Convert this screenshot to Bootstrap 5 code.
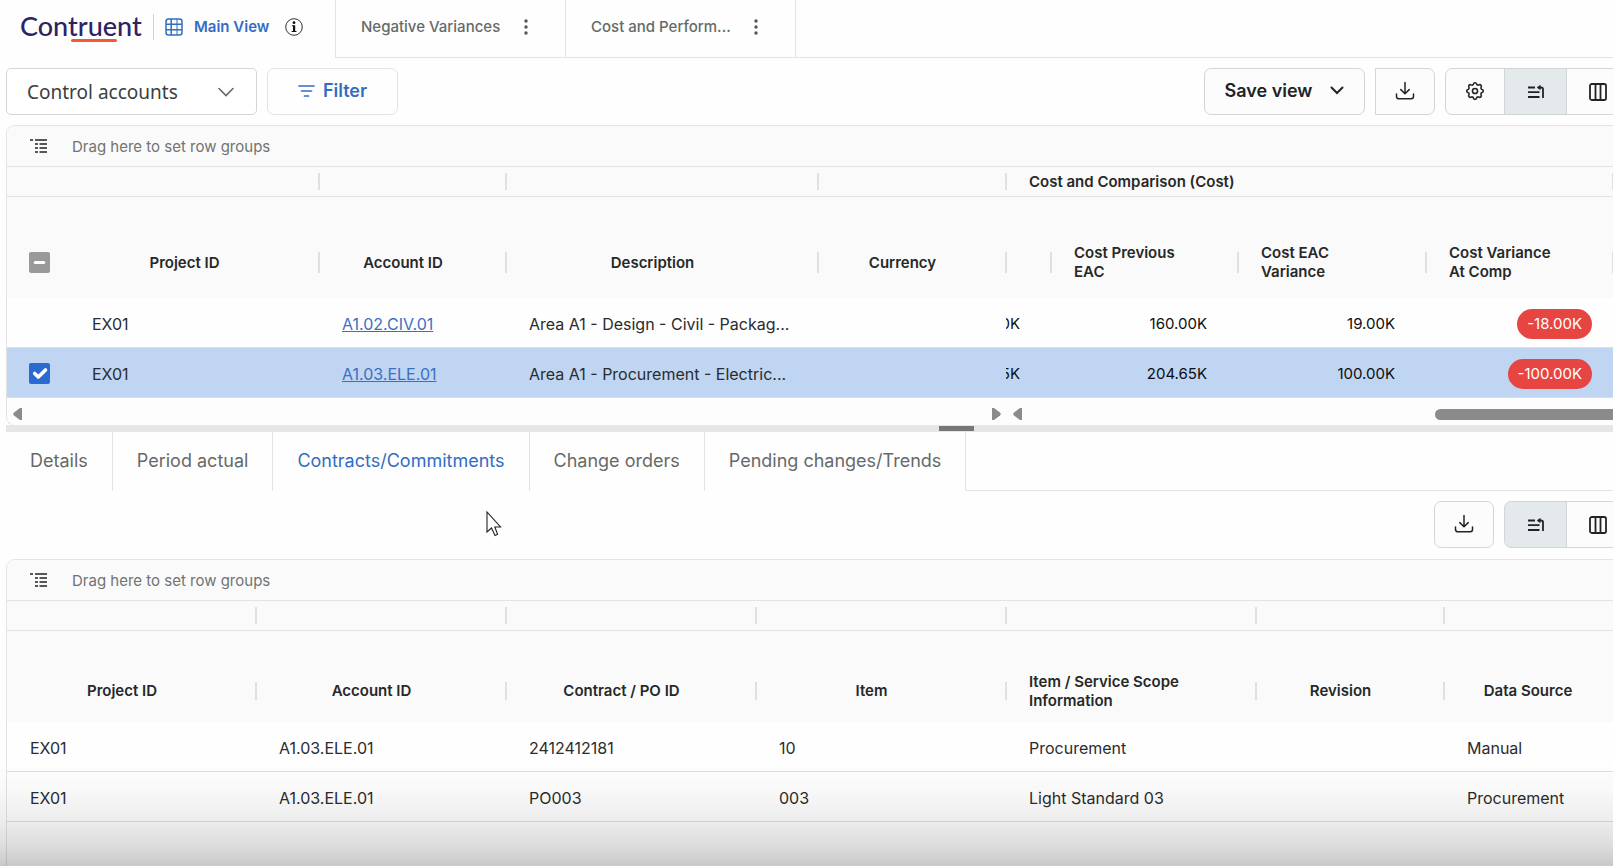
<!DOCTYPE html>
<html lang="en">
<head>
<meta charset="utf-8">
<meta name="viewport" content="width=device-width, initial-scale=1">
<title>Contruent – Control accounts</title>
<link href="https://cdn.jsdelivr.net/npm/bootstrap@5.3.0/dist/css/bootstrap.min.css" rel="stylesheet">
<style>
  :root { --line: #e2e3e4; --edge: #d3d6d9; --blue: #336dc3; --ink: #2a2c2e; --muted: #666a69; --soft: #fafafa; }
  body { font-family: Inter, "Liberation Sans", sans-serif; font-size: 16px; color: var(--ink); background: #fefefe; }
  svg { display: block; flex: none; }
  .shell { height: 100vh; overflow: hidden; }
  .work { margin-left: 6px; margin-right: -18px; }

  /* top bar */
  .topbar { height: 58px; }
  .brand-cell { width: 335px; padding-left: 20px; }
  .brand-name { font-family: Lato, sans-serif; font-size: 27px; line-height: 26px; padding-bottom: 2px; font-weight: 500; color: #2d2363; text-decoration: none; width: 122px; position: relative; }
  .brand-name::after { content: ""; position: absolute; left: 51px; bottom: -1px; width: 46px; height: 3px; border-radius: 2px; background: #f05a35; }
  .brand-rule { width: 1px; height: 26px; background: #cfd2d6; margin: 0 11px; }
  .view-link { font-size: 15px; font-weight: 600; color: var(--blue); text-decoration: none; gap: 11px; }
  .view-link span { padding-top: 1px; }
  .view-tab { width: 230px; border-left: 1px solid var(--line); border-bottom: 1px solid var(--line); padding: 0 20px 3px 25px; font-size: 15px; font-weight: 500; color: var(--muted); }
  .view-tab a { color: inherit; text-decoration: none; width: 155px; }
  .plain-btn { border: 0; background: none; padding: 0; color: inherit; }
  .topbar-rest { border-left: 1px solid var(--line); border-bottom: 1px solid var(--line); }

  /* toolbars */
  .tools { padding: 10px 2px 10px 0; gap: 10px; }
  .tools-lower { padding: 10px 2px 11px 0; gap: 10px; }
  .tool { height: 47px; border: 1px solid var(--edge); border-radius: 7px; background: #fcfcfc; color: #212426; font-size: 18px; font-weight: 600; padding: 0; display: flex; align-items: center; justify-content: center; }
  .tool-icon { width: 60px; padding-bottom: 2px; }
  .tool-group .tool { width: 63px; border-radius: 0; margin-left: -1px; }
  .tool-group .tool:first-child { border-radius: 7px 0 0 7px; margin-left: 0; }
  .tool-group .tool:last-child { border-radius: 0 7px 7px 0; }
  .tool-group .tool.is-on { background: #e4e9ec; }
  .tool-group .tool-gear { width: 60px; padding-bottom: 2px; }
  .tool-filter { width: 131px; background: #fefefe; border-color: var(--line); color: var(--blue); gap: 8px; padding-bottom: 2px; }
  .tool-save { width: 161px; gap: 18px; padding-bottom: 2px; }
  .entity-select { width: 251px; height: 47px; border: 1px solid var(--edge); border-radius: 5px; padding: 2px 20px 0; font-family: "Noto Sans", sans-serif; font-size: 19px; color: #3c4040; background-color: #fff;
    background-image: url("data:image/svg+xml,%3csvg xmlns='http://www.w3.org/2000/svg' viewBox='0 0 16 16'%3e%3cpath fill='none' stroke='%23666' stroke-width='1.6' stroke-linecap='round' d='M1 4.5l7 7 7-7'/%3e%3c/svg%3e"); background-position: right 22px center; background-size: 16px; }

  /* data grids */
  .grid-box { border: 1px solid var(--line); border-right: 0; border-radius: 9px 0 0 9px; overflow: hidden; }
  .grid-open { border-bottom: 0; border-bottom-left-radius: 0; }
  .group-drop { height: 41px; background: var(--soft); border-bottom: 1px solid var(--line); font-size: 15px; color: #707372; padding: 0 0 0 23px; gap: 24px; }
  .group-drop span { padding-top: 2px; }
  .grid-table { table-layout: fixed; width: 1624px; margin: 0; border-collapse: separate; border-spacing: 0; }
  .grid-table th { position: relative; background: var(--soft); font-size: 15px; font-weight: 600; line-height: 19px; padding: 0 54px 0 23px; color: #262829; }
  .band th { height: 30px; border-bottom: 1px solid var(--line); }
  .heads th { height: 101px; padding-top: 29px; }
  .heads-short th { height: 91px; padding-top: 28px; }
  .grid-table .name { text-align: center; padding-left: 23px; padding-right: 42px; }
  .split::after { content: ""; position: absolute; right: -1px; top: 6px; width: 2px; height: 17px; background: #dde1e6; z-index: 1; }
  .heads .split::after { top: 55px; height: 21px; }
  .heads-short .split::after { top: 51px; height: 18px; }
  .grid-table td { height: 50px; padding: 2px 23px 0; border-bottom: 1px solid #dcdfe3; white-space: nowrap; overflow: hidden; text-overflow: ellipsis; line-height: 24px; }
  .grid-table td.pick, .grid-table th.pick { padding-left: 22px; padding-right: 0; }
  .grid-table td.num { font-size: 15px; text-align: right; padding-right: 31px; padding-left: 0; color: #0c0d0e; }
  .grid-table td.cut { text-overflow: clip; }
  .cut span { display: flex; justify-content: flex-end; overflow: hidden; }
  .grid-table tr.chosen td { background: #bfd5f2; }
  .grid-table td a { color: #3a70c4; }
  .pill { display: inline-block; background: #e74542; color: #fff; border-radius: 15px; height: 30px; line-height: 30px; padding: 0 10px; margin-right: -10px; vertical-align: middle; }
  .form-check-input.box { width: 21px; height: 21px; margin: 0; border-radius: 2px; border: 0; display: block; }
  .form-check-input.box:checked { background-color: #2b6bd1; background-size: 24px; }
  .form-check-input.box:indeterminate { background-color: #999; }

  .hscroll { height: 27px; padding: 5px 0 0 6px; background: #fdfdfd; }
  .hscroll-pinned { width: 988px; }
  .hthumb { height: 11px; border-radius: 6px; background: #8b8b8b; width: 196px; }
  .splitter { height: 7px; margin-top: -1px; background: #e6e6e6; }
  .splitter span { width: 35px; height: 5px; margin-left: 933px; background: #777; display: block; }

  .detail-tabs { height: 59px; font-size: 18px; }
  .detail-tabs a { color: var(--muted); text-decoration: none; padding: 0 24px 2px; border-right: 1px solid var(--line); display: flex; align-items: center; }
  .detail-tabs a.on { color: var(--blue); }
  .detail-tabs .rest { border-bottom: 1px solid var(--line); }
  .fade-out { position: fixed; left: 0; right: 0; bottom: 0; height: 104px; pointer-events: none; z-index: 5; background: linear-gradient(rgba(0,0,0,0), rgba(0,0,0,.02) 25%, rgba(0,0,0,.065) 56%, rgba(0,0,0,.13) 80%, rgba(0,0,0,.21)); }
  .pointer { position: fixed; left: 486px; top: 511px; z-index: 6; }
</style>
</head>
<body>
<svg class="d-none" aria-hidden="true">
  <symbol id="i-download" viewBox="0 0 20 20"><path d="M10 1.500v11M5.800 8.600L10 12.800l4.200-4.200M1.500 13v2.600a2.200 2.200 0 0 0 2.200 2.200h12.600a2.200 2.200 0 0 0 2.200-2.200V13" fill="none" stroke="currentColor" stroke-width="1.500" stroke-linecap="round" stroke-linejoin="round"/></symbol>
  <symbol id="i-sort" viewBox="0 0 20 16"><path d="M2 3.500h7M2 8.200h11.500M2 13h11.500M17 14V5.200a1.700 1.700 0 0 0-1.700-1.700H12" fill="none" stroke="currentColor" stroke-width="1.800"/><path d="M10.800 3.500L14.500.8v5.400z" fill="currentColor"/></symbol>
  <symbol id="i-cols" viewBox="0 0 18 18"><path d="M2.800 1h12.400A1.800 1.800 0 0 1 17 2.800v12.400a1.800 1.800 0 0 1-1.800 1.800H2.800A1.800 1.800 0 0 1 1 15.200V2.800A1.800 1.800 0 0 1 2.800 1zM6.500 1v16M11.500 1v16" fill="none" stroke="currentColor" stroke-width="1.800"/></symbol>
  <symbol id="i-groups" viewBox="0 0 18 14"><path d="M0 1h3M5 1h12M5 5h3M9.500 5H17M5 9h3M9.500 9H17M5 13h3M9.500 13H17" fill="none" stroke="#222" stroke-width="1.300"/></symbol>
  <symbol id="i-dots" viewBox="0 0 4 16"><circle cx="2" cy="2" r="1.700"/><circle cx="2" cy="8" r="1.700"/><circle cx="2" cy="14" r="1.700"/></symbol>
  <symbol id="i-left" viewBox="0 0 10 12"><path d="M9 0v12L7 12 1 7.500Q-.5 6 1 4.500L7 0z" fill="#8b8b8b"/></symbol>
</svg>

<div class="shell d-flex flex-column">
  <header class="topbar d-flex flex-shrink-0">
    <div class="brand-cell d-flex align-items-center flex-shrink-0 pb-1">
      <a class="brand-name" href="#">Contruent</a>
      <span class="brand-rule"></span>
      <a class="view-link d-flex align-items-center" href="#">
        <svg width="18" height="18" viewBox="0 0 18 18" fill="none" stroke="currentColor" stroke-width="1.500"><rect x="1" y="1" width="16" height="16" rx="2.500"/><path d="M1 6.300h16M1 11.700h16M6.200 1v16" /><path d="M12 1v16" stroke-width="1"/></svg>
        <span>Main View</span>
      </a>
      <button class="plain-btn ms-3" type="button" aria-label="View information">
        <svg width="18" height="18" viewBox="0 0 18 18"><circle cx="9" cy="9" r="8.300" fill="none" stroke="#333" stroke-width="1"/><circle cx="9" cy="4.700" r="1.400" fill="#111"/><path d="M6.800 7.300h3.400v5.600h1.300v1H6.600v-1H8V8.300H6.800z" fill="#111"/></svg>
      </button>
    </div>
    <div class="view-tab d-flex align-items-center flex-shrink-0"><a href="#">Negative Variances</a>
      <button class="plain-btn ms-1" type="button" aria-label="Negative Variances menu"><svg class="ms-1" width="4" height="16" fill="#555"><use href="#i-dots"/></svg></button></div>
    <div class="view-tab d-flex align-items-center flex-shrink-0"><a href="#">Cost and Perform...</a>
      <button class="plain-btn ms-1" type="button" aria-label="Cost and Performance menu"><svg class="ms-1" width="4" height="16" fill="#555"><use href="#i-dots"/></svg></button></div>
    <div class="topbar-rest flex-grow-1"></div>
  </header>

  <main class="work d-flex flex-column flex-grow-1">
    <div class="tools d-flex">
      <select class="form-select entity-select" aria-label="Record type"><option>Control accounts</option></select>
      <button class="tool tool-filter" type="button">
        <svg width="17" height="14" viewBox="0 0 17 14"><path d="M1 2h15M3.500 7h10M6.500 12h4" stroke="currentColor" stroke-width="1.700" stroke-linecap="round"/></svg>Filter</button>
      <button class="tool tool-save ms-auto" type="button">Save view
        <svg width="14" height="9" viewBox="0 0 14 9"><path d="M1.500 1.500L7 7l5.500-5.500" fill="none" stroke="currentColor" stroke-width="2" stroke-linecap="round"/></svg></button>
      <button class="tool tool-icon rounded-start-0" type="button" aria-label="Download"><svg width="20" height="20"><use href="#i-download"/></svg></button>
      <div class="tool-group d-flex" role="group" aria-label="Grid options">
        <button class="tool tool-gear" type="button" aria-label="Settings"><svg width="22" height="22" viewBox="0 0 24 24" fill="none" stroke="currentColor" stroke-width="1.700" stroke-linejoin="round"><circle cx="12" cy="12" r="2.800"/><path d="M10.300 4.300c.4-1.800 3-1.800 3.400 0a1.700 1.700 0 0 0 2.600 1.100c1.500-1 3.300.8 2.400 2.400a1.700 1.700 0 0 0 1 2.500c1.800.4 1.800 3 0 3.400a1.700 1.700 0 0 0-1 2.600c.9 1.500-.9 3.300-2.400 2.400a1.700 1.700 0 0 0-2.600 1c-.4 1.800-3 1.800-3.400 0a1.700 1.700 0 0 0-2.600-1c-1.500.9-3.300-.9-2.400-2.400a1.700 1.700 0 0 0-1-2.600c-1.800-.4-1.800-3 0-3.400a1.700 1.700 0 0 0 1-2.500c-.9-1.600.9-3.400 2.400-2.400 1 .6 2.300.1 2.600-1.100z"/></svg></button>
        <button class="tool is-on" type="button" aria-label="Row grouping"><svg width="20" height="16"><use href="#i-sort"/></svg></button>
        <button class="tool" type="button" aria-label="Columns"><svg width="18" height="18"><use href="#i-cols"/></svg></button>
      </div>
    </div>

    <section class="grid-box flex-shrink-0">
      <div class="group-drop d-flex align-items-center"><svg width="18" height="14"><use href="#i-groups"/></svg><span>Drag here to set row groups</span></div>
      <table class="grid-table">
        <colgroup><col style="width:62px"><col style="width:250px"><col style="width:187px"><col style="width:312px"><col style="width:188px"><col style="width:45px"><col style="width:187px"><col style="width:188px"><col style="width:187px"><col></colgroup>
        <thead>
          <tr class="band"><th colspan="2" class="split"></th><th class="split"></th><th class="split"></th><th class="split"></th><th colspan="4" class="split">Cost and Comparison (Cost)</th><th></th></tr>
          <tr class="heads">
            <th class="pick"><input class="form-check-input box" type="checkbox" id="all" aria-label="Select all rows"></th>
            <th class="name split">Project ID</th><th class="name split">Account ID</th><th class="name split">Description</th><th class="name split">Currency</th>
            <th class="split p-0"></th><th class="split">Cost Previous EAC</th><th class="split">Cost EAC Variance</th><th class="split">Cost Variance At Comp</th><th class="p-0"></th>
          </tr>
        </thead>
        <tbody>
          <tr><td></td><td>EX01</td><td><a href="#">A1.02.CIV.01</a></td><td>Area A1 - Design - Civil - Packag...</td><td></td><td class="num cut"><span>0K</span></td><td class="num">160.00K</td><td class="num">19.00K</td><td class="num"><span class="pill">-18.00K</span></td><td class="p-0"></td></tr>
          <tr class="chosen"><td class="pick"><input class="form-check-input box" type="checkbox" checked aria-label="Select row A1.03.ELE.01"></td><td>EX01</td><td><a href="#">A1.03.ELE.01</a></td><td>Area A1 - Procurement - Electric...</td><td></td><td class="num cut"><span>5K</span></td><td class="num">204.65K</td><td class="num">100.00K</td><td class="num"><span class="pill">-100.00K</span></td><td class="p-0"></td></tr>
        </tbody>
      </table>
      <div class="hscroll d-flex align-items-center">
        <div class="hscroll-pinned d-flex justify-content-between"><svg width="10" height="12"><use href="#i-left"/></svg><svg width="10" height="12" viewBox="0 0 10 12"><path d="M1 0v12h2l6-4.500Q10.500 6 9 4.500L3 0z" fill="#8b8b8b"/></svg></div>
        <svg class="ms-2 me-auto" width="18" height="12"><use href="#i-left"/></svg>
        <div class="hthumb"></div>
      </div>
    </section>
    <div class="splitter d-flex align-items-center flex-shrink-0"><span></span></div>

    <nav class="detail-tabs d-flex flex-shrink-0" aria-label="Detail views">
      <a href="#">Details</a><a href="#">Period actual</a><a class="on" href="#" aria-current="page">Contracts/Commitments</a><a href="#">Change orders</a><a href="#">Pending changes/Trends</a>
      <span class="rest flex-grow-1"></span>
    </nav>

    <div class="tools-lower d-flex justify-content-end">
      <button class="tool tool-icon" type="button" aria-label="Download commitments"><svg width="20" height="20"><use href="#i-download"/></svg></button>
      <div class="tool-group d-flex" role="group" aria-label="Commitment grid options">
        <button class="tool is-on" type="button" aria-label="Row grouping"><svg width="20" height="16"><use href="#i-sort"/></svg></button>
        <button class="tool" type="button" aria-label="Columns"><svg width="18" height="18"><use href="#i-cols"/></svg></button>
      </div>
    </div>

    <section class="grid-box grid-open flex-grow-1">
      <div class="group-drop d-flex align-items-center"><svg width="18" height="14"><use href="#i-groups"/></svg><span>Drag here to set row groups</span></div>
      <table class="grid-table">
        <colgroup><col style="width:249px"><col style="width:250px"><col style="width:250px"><col style="width:250px"><col style="width:250px"><col style="width:188px"><col style="width:187px"></colgroup>
        <thead>
          <tr class="band"><th class="split"></th><th class="split"></th><th class="split"></th><th class="split"></th><th class="split"></th><th class="split"></th><th></th></tr>
          <tr class="heads heads-short"><th class="name split">Project ID</th><th class="name split">Account ID</th><th class="name split">Contract / PO ID</th><th class="name split">Item</th><th class="split">Item / Service Scope Information</th><th class="name split">Revision</th><th class="name">Data Source</th></tr>
        </thead>
        <tbody>
          <tr><td>EX01</td><td>A1.03.ELE.01</td><td>2412412181</td><td>10</td><td>Procurement</td><td></td><td>Manual</td></tr>
          <tr><td>EX01</td><td>A1.03.ELE.01</td><td>PO003</td><td>003</td><td>Light Standard 03</td><td></td><td>Procurement</td></tr>
        </tbody>
      </table>
    </section>
  </main>
</div>
<div class="fade-out"></div>
<svg class="pointer" width="16" height="26" viewBox="0 0 16 26"><path d="M1 1v20l4.500-4L9 24.500l2.600-1.300L8.800 16H14.500z" fill="#fff" stroke="#222" stroke-width="1.100"/></svg>
<script src="https://cdn.jsdelivr.net/npm/bootstrap@5.3.0/dist/js/bootstrap.bundle.min.js"></script>
<script>document.getElementById('all').indeterminate = true;</script>
</body>
</html>
